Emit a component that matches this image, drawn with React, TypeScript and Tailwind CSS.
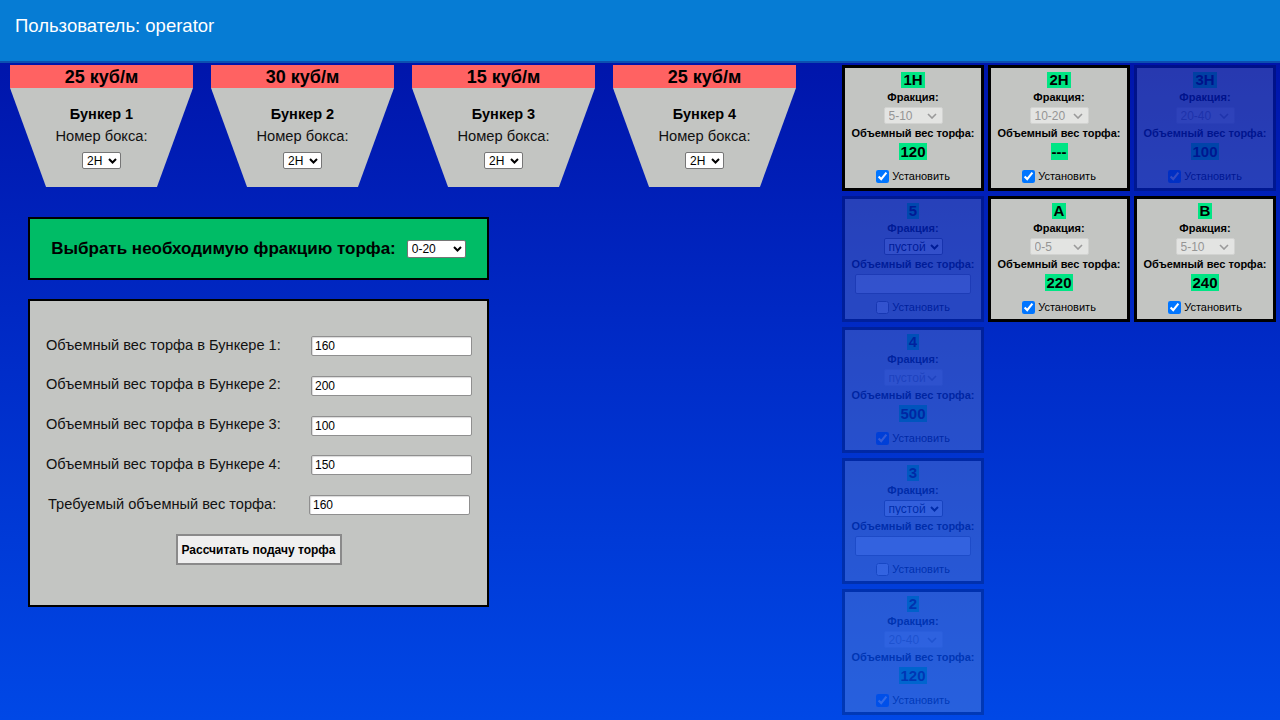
import React from "react";

const font = { fontFamily: '"Liberation Sans", Arial, sans-serif' };

type Cell = {
  name: string;
  frac: string;
  value?: string;
  enabledSelect?: boolean;
  checked: boolean;
  dim?: boolean;
};

function Chevron({ gray, top }: { gray?: boolean; top: string }) {
  return gray ? (
    <svg width="10" height="6" viewBox="0 0 10 6" className={"absolute right-[6px] pointer-events-none " + top}>
      <path d="M1 1 L5 5 L9 1" fill="none" stroke="#9a9a9a" strokeWidth="1.6" />
    </svg>
  ) : (
    <svg width="9" height="6" viewBox="0 0 9 6" className={"absolute right-[4px] pointer-events-none " + top}>
      <path d="M1 1 L4.5 4.5 L8 1" fill="none" stroke="#000" strokeWidth="2" />
    </svg>
  );
}

function Select({
  value,
  w,
  h,
  top,
  disabled,
}: {
  value: string;
  w: string;
  h: string;
  top: string;
  disabled?: boolean;
}) {
  return (
    <div className={"relative " + w + " " + h}>
      <select
        disabled={disabled}
        defaultValue={value}
        className={
          "block appearance-none w-full h-full text-[12px] leading-none pl-[4px] rounded-[2px] border " +
          (disabled
            ? "bg-[#e3e4e2] border-[#d2d3d1] text-[#959595]"
            : "bg-white border-[#767676] text-black")
        }
      >
        <option>{value}</option>
      </select>
      <Chevron gray={disabled} top={top} />
    </div>
  );
}

function Bunker({ vol, n }: { vol: string; n: number }) {
  return (
    <div className="w-[183px] flex flex-col">
      <div className="h-[23px] bg-[#ff6262] flex items-center justify-center text-[18px] font-bold text-black leading-none">
        {vol}
      </div>
      <div className="h-[99px] bg-[#c3c5c2] [clip-path:polygon(0_0,100%_0,80.3%_100%,19.7%_100%)] flex flex-col items-center pt-[18px]">
        <div className="text-[14.5px] font-bold leading-[17px] text-black">Бункер {n}</div>
        <div className="text-[14.7px] leading-[17px] mt-[5px] text-[#111]">Номер бокса:</div>
        <div className="mt-[7px]">
          <Select value="2H" w="w-[39px]" h="h-[17px]" top="top-[6px]" />
        </div>
      </div>
    </div>
  );
}

function BoxCell({ c }: { c: Cell }) {
  return (
    <div
      className={
        "w-[142px] h-[126px] border-[3px] border-black bg-[#c3c5c2] flex flex-col items-center " +
        (c.dim ? "opacity-20" : "")
      }
    >
      <div className="mt-[4px] h-[16px] px-[2px] bg-[#00e584] text-[15px] font-bold leading-[16px] text-black">
        {c.name}
      </div>
      <div className="mt-[3px] text-[11px] font-bold leading-[13px] text-black">Фракция:</div>
      <div className="mt-[3px]">
        <Select value={c.frac} w="w-[59px]" h="h-[17px]" top="top-[6px]" disabled={!c.enabledSelect} />
      </div>
      <div className="mt-[3px] text-[11px] font-bold leading-[13px] text-black">Объемный вес торфа:</div>
      <div className="mt-[3px] h-[20px] flex items-start justify-center">
        {c.value !== undefined ? (
          <div className="h-[17px] px-[1px] bg-[#00e584] text-[15px] font-bold leading-[17px] text-black">
            {c.value}
          </div>
        ) : (
          <input
            type="text"
            className="block h-[20px] w-[116px] bg-white border border-[#8f8f8f] rounded-[2px]"
          />
        )}
      </div>
      <label className="mt-[7px] h-[13px] flex items-center gap-[3px] text-[11px] leading-[13px] text-black">
        <input type="checkbox" defaultChecked={c.checked} className="w-[13px] h-[13px] m-0" />
        Установить
      </label>
    </div>
  );
}

function FormRow({ label, value, last }: { label: string; value: string; last?: boolean }) {
  return (
    <div
      className={
        "flex items-center justify-between h-[20px] " + (last ? "pl-[18px] pr-[17px]" : "pl-[16px] pr-[15px]")
      }
    >
      <span className="text-[14.6px] text-[#111] leading-none -mt-[2px]">{label}</span>
      <input
        type="text"
        defaultValue={value}
        className="block w-[161px] h-[20px] bg-white border border-[#8f8f8f] rounded-[2px] text-[12px] text-black px-[3px] shadow-[inset_1px_1px_1px_rgba(0,0,0,0.15)]"
      />
    </div>
  );
}

export default function App() {
  const cells: (Cell | null)[] = [
    { name: "1H", frac: "5-10", value: "120", checked: true },
    { name: "2H", frac: "10-20", value: "---", checked: true },
    { name: "3H", frac: "20-40", value: "100", checked: true, dim: true },
    { name: "5", frac: "пустой", enabledSelect: true, checked: false, dim: true },
    { name: "A", frac: "0-5", value: "220", checked: true },
    { name: "B", frac: "5-10", value: "240", checked: true },
    { name: "4", frac: "пустой", value: "500", checked: true, dim: true },
    null,
    null,
    { name: "3", frac: "пустой", enabledSelect: true, checked: false, dim: true },
    null,
    null,
    { name: "2", frac: "20-40", value: "120", checked: true, dim: true },
  ];

  return (
    <div
      style={font}
      className="w-[1280px] h-[720px] overflow-hidden flex flex-col bg-[linear-gradient(180deg,#0012a4_0%,#0016ac_10%,#002cc8_50%,#0048e6_100%)]"
    >
      <div className="h-[63px] shrink-0 bg-[#067cd4] border-b-2 border-[#0c4fb0] flex items-start pl-[15px] pt-[15px]">
        <span className="text-white text-[18.5px] leading-[22px]">Пользователь: operator</span>
      </div>
      <div className="flex pt-[2px]">
        <div className="w-[842px] shrink-0 flex flex-col">
          <div className="flex gap-[18px] pl-[10px]">
            <Bunker vol="25 куб/м" n={1} />
            <Bunker vol="30 куб/м" n={2} />
            <Bunker vol="15 куб/м" n={3} />
            <Bunker vol="25 куб/м" n={4} />
          </div>
          <div className="ml-[28px] mt-[30px] w-[461px] h-[63px] border-2 border-black bg-[#00bc66] flex items-center justify-center gap-[11px]">
            <span className="text-[17px] font-bold text-black">Выбрать необходимую фракцию торфа:</span>
            <Select value="0-20" w="w-[59px]" h="h-[18px]" top="top-[6px]" />
          </div>
          <div className="ml-[28px] mt-[19px] w-[461px] h-[308px] border-2 border-black bg-[#c3c5c2] flex flex-col pt-[35px]">
            <div className="flex flex-col gap-[19.75px]">
              <FormRow label="Объемный вес торфа в Бункере 1:" value="160" />
              <FormRow label="Объемный вес торфа в Бункере 2:" value="200" />
              <FormRow label="Объемный вес торфа в Бункере 3:" value="100" />
              <FormRow label="Объемный вес торфа в Бункере 4:" value="150" />
              <FormRow label="Требуемый объемный вес торфа:" value="160" last />
            </div>
            <div className="flex justify-center mt-[19px]">
              <button className="w-[166px] h-[31px] bg-[#efefef] border-2 border-[#8a8a8a] text-[12px] font-bold text-black">
                Рассчитать подачу торфа
              </button>
            </div>
          </div>
        </div>
        <div className="grid grid-cols-[142px_142px_142px] gap-x-[4px] gap-y-[5px] content-start">
          {cells.map((c, i) => (c ? <BoxCell key={i} c={c} /> : <div key={i} className="w-[142px] h-[126px]" />))}
        </div>
      </div>
    </div>
  );
}
